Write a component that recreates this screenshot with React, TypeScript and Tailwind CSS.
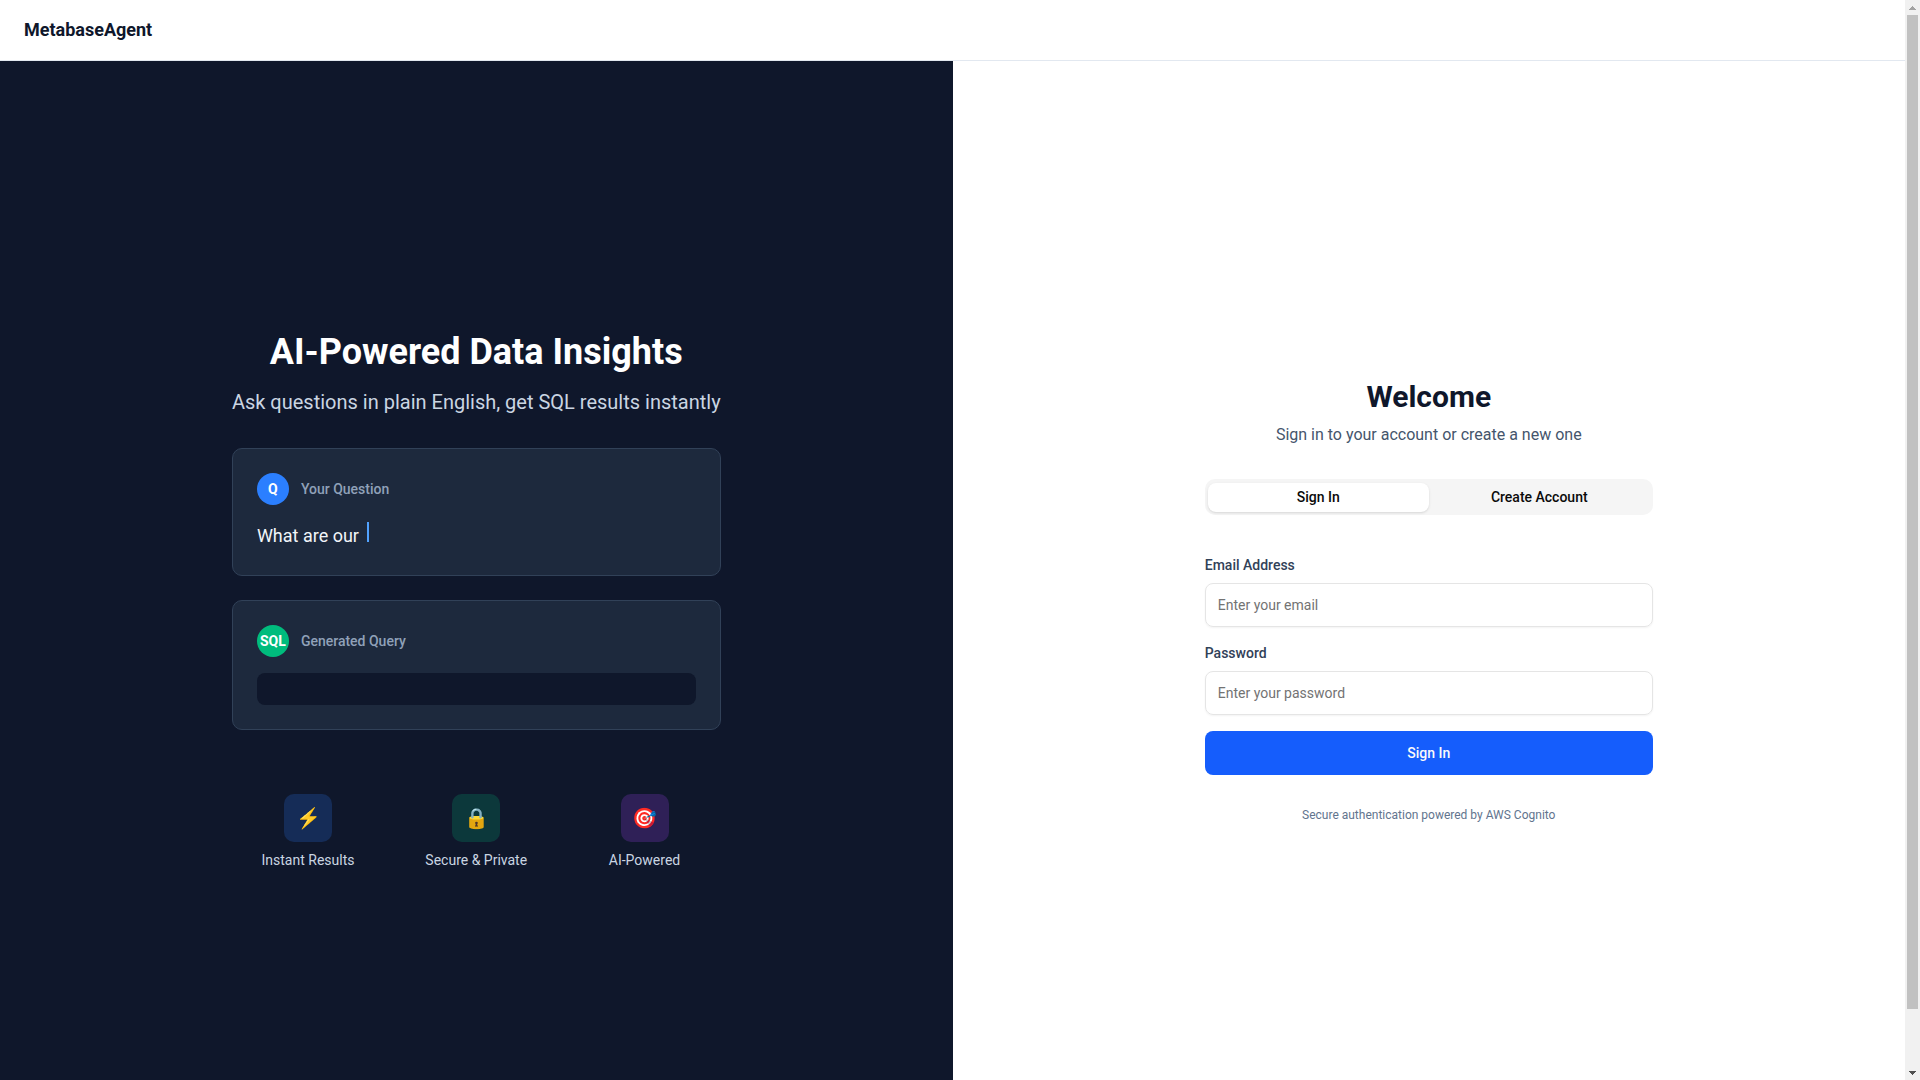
import { useRef, useState } from "react";
import { clsx } from "clsx";

const FEATURES = [
  { icon: "⚡", label: "Instant Results", tint: "bg-blue-500/20" },
  { icon: "🔒", label: "Secure & Private", tint: "bg-emerald-500/20" },
  { icon: "🎯", label: "AI-Powered", tint: "bg-purple-500/20" },
];

const TABS = [
  { id: "signin", label: "Sign In" },
  { id: "signup", label: "Create Account" },
];

function DemoCard({
  badge,
  badgeColor,
  title,
  children,
}: {
  badge: string;
  badgeColor: string;
  title: string;
  children: React.ReactNode;
}) {
  return (
    <div className="rounded-[10px] border border-slate-700 bg-slate-800 p-6 text-left">
      <div className="mb-4 flex items-center gap-3">
        <div
          className={clsx(
            "flex h-8 w-8 items-center justify-center rounded-full text-sm font-bold text-white",
            badgeColor
          )}
        >
          {badge}
        </div>
        <span className="text-sm font-medium text-slate-400">{title}</span>
      </div>
      {children}
    </div>
  );
}

function Field({
  id,
  label,
  type,
  placeholder,
}: {
  id: string;
  label: string;
  type: string;
  placeholder: string;
}) {
  return (
    <div className="space-y-2">
      <label htmlFor={id} className="block text-sm font-medium text-slate-700">
        {label}
      </label>
      <input
        id={id}
        type={type}
        placeholder={placeholder}
        className="block h-11 w-full rounded-lg border border-neutral-200 bg-transparent px-3 text-sm shadow-xs outline-none placeholder:text-neutral-500"
      />
    </div>
  );
}

function ScrollRail({ onStep }: { onStep: (delta: number) => void }) {
  return (
    <div className="flex w-[15px] shrink-0 flex-col bg-[#f1f1f1]">
      <button
        type="button"
        aria-label="Scroll up"
        onClick={() => onStep(-40)}
        className="flex h-[15px] items-center justify-center"
      >
        <svg width="7" height="4" viewBox="0 0 7 4" fill="#a3a3a3" shapeRendering="crispEdges">
          <path d="M3 0h1v1h1v1h1v1h1v1H0V3h1V2h1V1h1z" />
        </svg>
      </button>
      <div className="flex flex-1 flex-col">
        <div className="mx-[2px] grow-[947] basis-0 bg-[#c1c1c1]" />
        <div className="grow-[53] basis-0" />
      </div>
      <button
        type="button"
        aria-label="Scroll down"
        onClick={() => onStep(40)}
        className="flex h-[15px] items-center justify-center"
      >
        <svg width="7" height="4" viewBox="0 0 7 4" fill="#505050" shapeRendering="crispEdges">
          <path d="M0 0h7v1H6v1H5v1H4v1H3V3H2V2H1V1H0z" />
        </svg>
      </button>
    </div>
  );
}

export default function App() {
  const [tab, setTab] = useState("signin");
  const paneRef = useRef<HTMLDivElement>(null);
  const action = tab === "signin" ? "Sign In" : "Create Account";

  return (
    <div className="flex h-screen bg-white font-[Roboto,sans-serif] text-neutral-950">
      <div
        ref={paneRef}
        className="min-w-0 flex-1 overflow-y-auto [scrollbar-width:none]"
      >
        <header className="border-b border-slate-200 px-6 py-4">
          <div className="flex h-7 items-center">
            <span className="text-lg font-bold text-slate-900">MetabaseAgent</span>
          </div>
        </header>

        <main className="grid min-h-screen grid-cols-2">
          {/* Product demo */}
          <section className="flex items-center justify-center bg-slate-900 p-8">
            <div className="max-w-lg text-center">
              <h1 className="mb-4 text-4xl font-bold text-white">
                AI-Powered Data Insights
              </h1>
              <p className="mb-8 text-xl text-slate-300">
                Ask questions in plain English, get SQL results instantly
              </p>

              <div className="space-y-6">
                <DemoCard badge="Q" badgeColor="bg-blue-500" title="Your Question">
                  <p className="text-lg leading-[30px] whitespace-pre text-slate-100">
                    {"What are our "}
                    <span className="ml-1 inline-block h-5 w-0.5 bg-blue-400" />
                  </p>
                </DemoCard>
                <DemoCard badge="SQL" badgeColor="bg-emerald-500" title="Generated Query">
                  <div className="h-8 rounded-lg bg-slate-900" />
                </DemoCard>
              </div>

              <div className="mt-16 grid grid-cols-3 gap-4">
                {FEATURES.map((feature) => (
                  <div key={feature.label} className="flex flex-col items-center gap-2">
                    <div
                      className={clsx(
                        "flex h-12 w-12 items-center justify-center rounded-[10px] text-xl",
                        feature.tint
                      )}
                    >
                      {feature.icon}
                    </div>
                    <p className="text-sm text-slate-300">{feature.label}</p>
                  </div>
                ))}
              </div>
            </div>
          </section>

          {/* Auth form */}
          <section className="flex items-center justify-center bg-white p-8">
            <div className="w-full max-w-md">
              <div className="mb-8 text-center">
                <h2 className="mb-2 text-3xl font-bold text-slate-900">Welcome</h2>
                <p className="text-slate-600">
                  Sign in to your account or create a new one
                </p>
              </div>

              <div
                role="tablist"
                className="grid h-9 grid-cols-2 items-center rounded-[10px] bg-neutral-100 p-[3px]"
              >
                {TABS.map(({ id, label }) => (
                  <button
                    key={id}
                    type="button"
                    role="tab"
                    aria-selected={tab === id}
                    onClick={() => setTab(id)}
                    className={clsx(
                      "h-[29px] rounded-lg text-sm font-medium",
                      tab === id && "bg-white shadow-sm"
                    )}
                  >
                    {label}
                  </button>
                ))}
              </div>

              <form
                className="mt-10 space-y-4"
                onSubmit={(e) => e.preventDefault()}
              >
                <Field
                  id="email"
                  label="Email Address"
                  type="email"
                  placeholder="Enter your email"
                />
                <Field
                  id="password"
                  label="Password"
                  type="password"
                  placeholder="Enter your password"
                />
                <button
                  type="submit"
                  className="h-11 w-full rounded-lg bg-blue-600 text-sm font-medium text-neutral-50"
                >
                  {action}
                </button>
              </form>

              <p className="mt-8 text-center text-xs text-slate-500">
                Secure authentication powered by AWS Cognito
              </p>
            </div>
          </section>
        </main>
      </div>

      <ScrollRail onStep={(delta) => paneRef.current?.scrollBy({ top: delta })} />
    </div>
  );
}
